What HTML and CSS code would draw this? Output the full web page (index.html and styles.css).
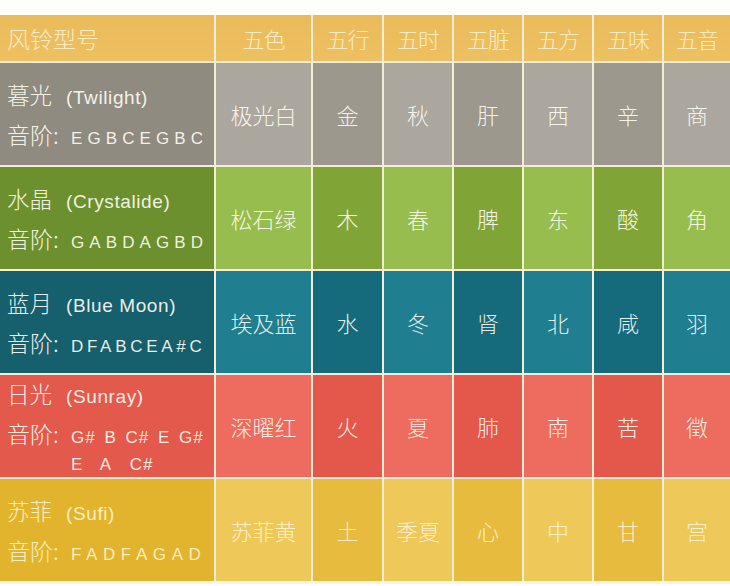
FILE: index.html
```html
<!DOCTYPE html>
<html lang="zh">
<head>
<meta charset="utf-8">
<title>风铃型号</title>
<link rel="stylesheet" href="styles.css">
</head>
<body>
<div class="page">
  <div class="table">
    <div class="hd hd-first">风铃型号</div>
    <div class="hd">五色</div>
    <div class="hd">五行</div>
    <div class="hd">五时</div>
    <div class="hd">五脏</div>
    <div class="hd">五方</div>
    <div class="hd">五味</div>
    <div class="hd">五音</div>

    <div class="first gray-0"><div class="name">暮光<span class="en">(Twilight)</span></div><div class="scale"><span class="lbl">音阶:</span><span class="notes ls-51">EGBCEGBC</span></div></div>
    <div class="cell gray-1">极光白</div>
    <div class="cell gray-2">金</div>
    <div class="cell gray-1">秋</div>
    <div class="cell gray-2">肝</div>
    <div class="cell gray-1">西</div>
    <div class="cell gray-2">辛</div>
    <div class="cell gray-1">商</div>

    <div class="first green-0"><div class="name">水晶<span class="en">(Crystalide)</span></div><div class="scale"><span class="lbl">音阶:</span><span class="notes ls-51">GABDAGBD</span></div></div>
    <div class="cell green-1">松石绿</div>
    <div class="cell green-2">木</div>
    <div class="cell green-1">春</div>
    <div class="cell green-2">脾</div>
    <div class="cell green-1">东</div>
    <div class="cell green-2">酸</div>
    <div class="cell green-1">角</div>

    <div class="first teal-0"><div class="name">蓝月<span class="en">(Blue Moon)</span></div><div class="scale"><span class="lbl">音阶:</span><span class="notes ls-38">DFABCEA#C</span></div></div>
    <div class="cell teal-1">埃及蓝</div>
    <div class="cell teal-2">水</div>
    <div class="cell teal-1">冬</div>
    <div class="cell teal-2">肾</div>
    <div class="cell teal-1">北</div>
    <div class="cell teal-2">咸</div>
    <div class="cell teal-1">羽</div>

    <div class="first red-0"><div class="name">日光<span class="en">(Sunray)</span></div><div class="scale"><span class="lbl">音阶:</span><span class="notes notes-wrap">G# B C# E G#<br>E&nbsp; A&nbsp; C#</span></div></div>
    <div class="cell red-1">深曜红</div>
    <div class="cell red-2">火</div>
    <div class="cell red-1">夏</div>
    <div class="cell red-2">肺</div>
    <div class="cell red-1">南</div>
    <div class="cell red-2">苦</div>
    <div class="cell red-1">徵</div>

    <div class="first yellow-0"><div class="name">苏菲<span class="en">(Sufi)</span></div><div class="scale"><span class="lbl">音阶:</span><span class="notes ls-56">FADFAGAD</span></div></div>
    <div class="cell yellow-1">苏菲黄</div>
    <div class="cell yellow-2">土</div>
    <div class="cell yellow-1">季夏</div>
    <div class="cell yellow-2">心</div>
    <div class="cell yellow-1">中</div>
    <div class="cell yellow-2">甘</div>
    <div class="cell yellow-1">宫</div>
  </div>
</div>
</body>
</html>
```

FILE: styles.css
```css
html, body {
  margin: 0;
  padding: 0;
  background: #fefefb;
}
body {
  width: 730px;
  height: 586px;
  overflow: hidden;
  font-family: "Liberation Sans", "Noto Sans CJK SC", sans-serif;
}
.page {
  padding-top: 15px;
}
.table {
  display: grid;
  grid-template-columns: 214px 95px 69px 68px 68px 68px 68px 66px;
  grid-template-rows: 46px repeat(5, 102px);
  gap: 2px;
  background: #f4eed6;
  border-bottom: 3px solid #faf6e8;
}
.hd {
  background: linear-gradient(#eabb5a, #edc062);
  color: #fcecc6;
  font-family: "Noto Sans CJK SC", sans-serif;
  font-size: 22px;
  font-weight: 300;
  display: flex;
  align-items: center;
  justify-content: center;
  letter-spacing: -1px;
}
.hd-first {
  justify-content: flex-start;
  padding-left: 7px;
  font-size: 23px;
  letter-spacing: 0;
}
.cell {
  display: flex;
  align-items: center;
  justify-content: center;
  font-family: "Noto Sans CJK SC", sans-serif;
  font-size: 22px;
  font-weight: 300;
  color: rgba(255, 252, 242, 0.92);
}
.first {
  display: flex;
  flex-direction: column;
  justify-content: center;
  padding-left: 7px;
  color: rgba(255, 252, 242, 0.93);
}
.name {
  font-family: "Noto Sans CJK SC", sans-serif;
  font-size: 22.5px;
  font-weight: 300;
  line-height: 36px;
  white-space: nowrap;
}
.en {
  font-family: "Liberation Sans", sans-serif;
  font-size: 19px;
  letter-spacing: 0.6px;
  margin-left: 14px;
}
.scale {
  display: flex;
  align-items: baseline;
}
.lbl {
  font-family: "Noto Sans CJK SC", sans-serif;
  font-size: 23px;
  font-weight: 300;
  line-height: 37px;
  width: 64px;
  flex: none;
}
.notes {
  font-family: "Liberation Sans", sans-serif;
  font-size: 17px;
  line-height: 27px;
  white-space: nowrap;
}
.ls-51 { letter-spacing: 5.1px; }
.ls-38 { letter-spacing: 3.7px; }
.ls-56 { letter-spacing: 5.6px; }
.notes-wrap {
  letter-spacing: 1px;
  word-spacing: 3px;
}

.gray-0 { background: #8f8b81; }
.gray-1 { background: #aba79e; }
.gray-2 { background: #9c988e; }

.green-0 { background: #6c902e; }
.green-1 { background: #98bd4f; }
.green-2 { background: #80a536; }

.teal-0 { background: #165f6d; }
.teal-1 { background: #1f7e8f; }
.teal-2 { background: #156b7b; }

.red-0 { background: #e35a4d; }
.red-1 { background: #ed6b5f; }
.red-2 { background: #e4584c; }

.yellow-0 { background: #e2b42e; }
.yellow-1 { background: #eec859; }
.yellow-2 { background: #e7bc3e; }
.yellow-0, .yellow-1, .yellow-2 { color: rgba(255, 248, 222, 0.85); }
```
